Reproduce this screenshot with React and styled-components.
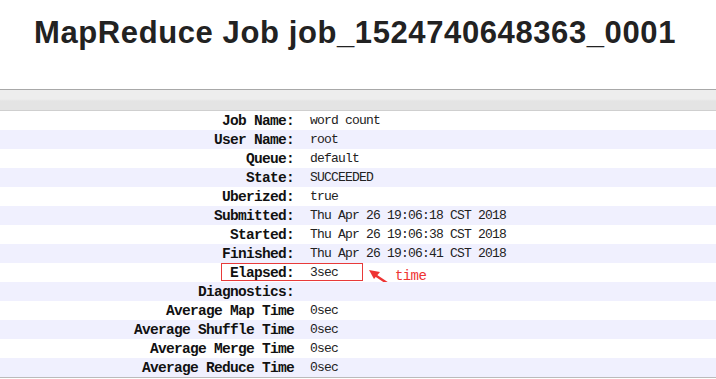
import React from 'react'
import styled, { createGlobalStyle } from 'styled-components'

const Global = createGlobalStyle`
  html, body {
    margin: 0;
    padding: 0;
    background: #fff;
    overflow: hidden;
  }
`

const rows = [
  ['Job Name:', 'word count'],
  ['User Name:', 'root'],
  ['Queue:', 'default'],
  ['State:', 'SUCCEEDED'],
  ['Uberized:', 'true'],
  ['Submitted:', 'Thu Apr 26 19:06:18 CST 2018'],
  ['Started:', 'Thu Apr 26 19:06:38 CST 2018'],
  ['Finished:', 'Thu Apr 26 19:06:41 CST 2018'],
  ['Elapsed:', '3sec', true],
  ['Diagnostics:', ''],
  ['Average Map Time', '0sec'],
  ['Average Shuffle Time', '0sec'],
  ['Average Merge Time', '0sec'],
  ['Average Reduce Time', '0sec'],
]

const App = () => {
  return (
    <Page>
      <Global />
      <Header>
        <Title>MapReduce Job job_1524740648363_0001</Title>
      </Header>
      <Bar />
      <Info>
        {rows.map(([label, value, marked], i) => (
          <Row key={label} $odd={i % 2 === 1}>
            <Label>{label}</Label>
            <Value>{value}</Value>
            {marked && (
              <>
                <Mark />
                <Arrow width="22" height="16" viewBox="0 0 22 16">
                  <path d="M19 14 L7 6" stroke="#ee3333" strokeWidth="2.4" fill="none" />
                  <path d="M1 1 L12 3 L6 10 Z" fill="#ee3333" />
                </Arrow>
                <Note>time</Note>
              </>
            )}
          </Row>
        ))}
      </Info>
    </Page>
  )
}

const Page = styled.div`
  width: 716px;
  height: 379px;
  background: #fff;
`

const Header = styled.div`
  height: 89px;
  display: flex;
  justify-content: center;
  padding-right: 6px;
  box-sizing: border-box;
`

const Title = styled.h1`
  margin: 13px 0 0;
  font-family: "Liberation Sans", Arial, sans-serif;
  font-weight: 700;
  font-size: 31px;
  line-height: 40px;
  color: #222;
  letter-spacing: 0.6px;
  white-space: nowrap;
`

const Bar = styled.div`
  height: 20px;
  border-top: 1px solid #a8a8a8;
  border-bottom: 1px solid #cfcfcf;
  background: linear-gradient(#ededed 0%, #ededed 45%, #e4e4e4 55%, #e4e4e4 100%);
`

const Info = styled.div`
  display: flex;
  flex-direction: column;
  border-bottom: 1px solid #bbb;
`

const Row = styled.div`
  position: relative;
  display: grid;
  grid-template-columns: 294px 1fr;
  column-gap: 16px;
  height: 19px;
  align-items: center;
  background: ${p => (p.$odd ? '#f0f0fe' : '#fff')};
`

const Label = styled.div`
  text-align: right;
  font-family: "Liberation Mono", "DejaVu Sans Mono", monospace;
  font-weight: 700;
  font-size: 14.5px;
  letter-spacing: -0.7px;
  color: #111;
  white-space: nowrap;
`

const Value = styled.div`
  font-family: "Liberation Mono", "DejaVu Sans Mono", monospace;
  font-size: 13px;
  letter-spacing: -0.8px;
  color: #222;
  white-space: nowrap;
`

const Mark = styled.div`
  position: absolute;
  left: 221px;
  top: 0;
  width: 140px;
  height: 16px;
  border: 1px solid #e83a3a;
`

const Arrow = styled.svg`
  position: absolute;
  left: 368px;
  top: 6px;
`

const Note = styled.span`
  position: absolute;
  left: 395px;
  top: 5px;
  font-family: "Liberation Mono", "DejaVu Sans Mono", monospace;
  font-size: 14px;
  letter-spacing: -0.6px;
  color: #ee3333;
`

export default App
